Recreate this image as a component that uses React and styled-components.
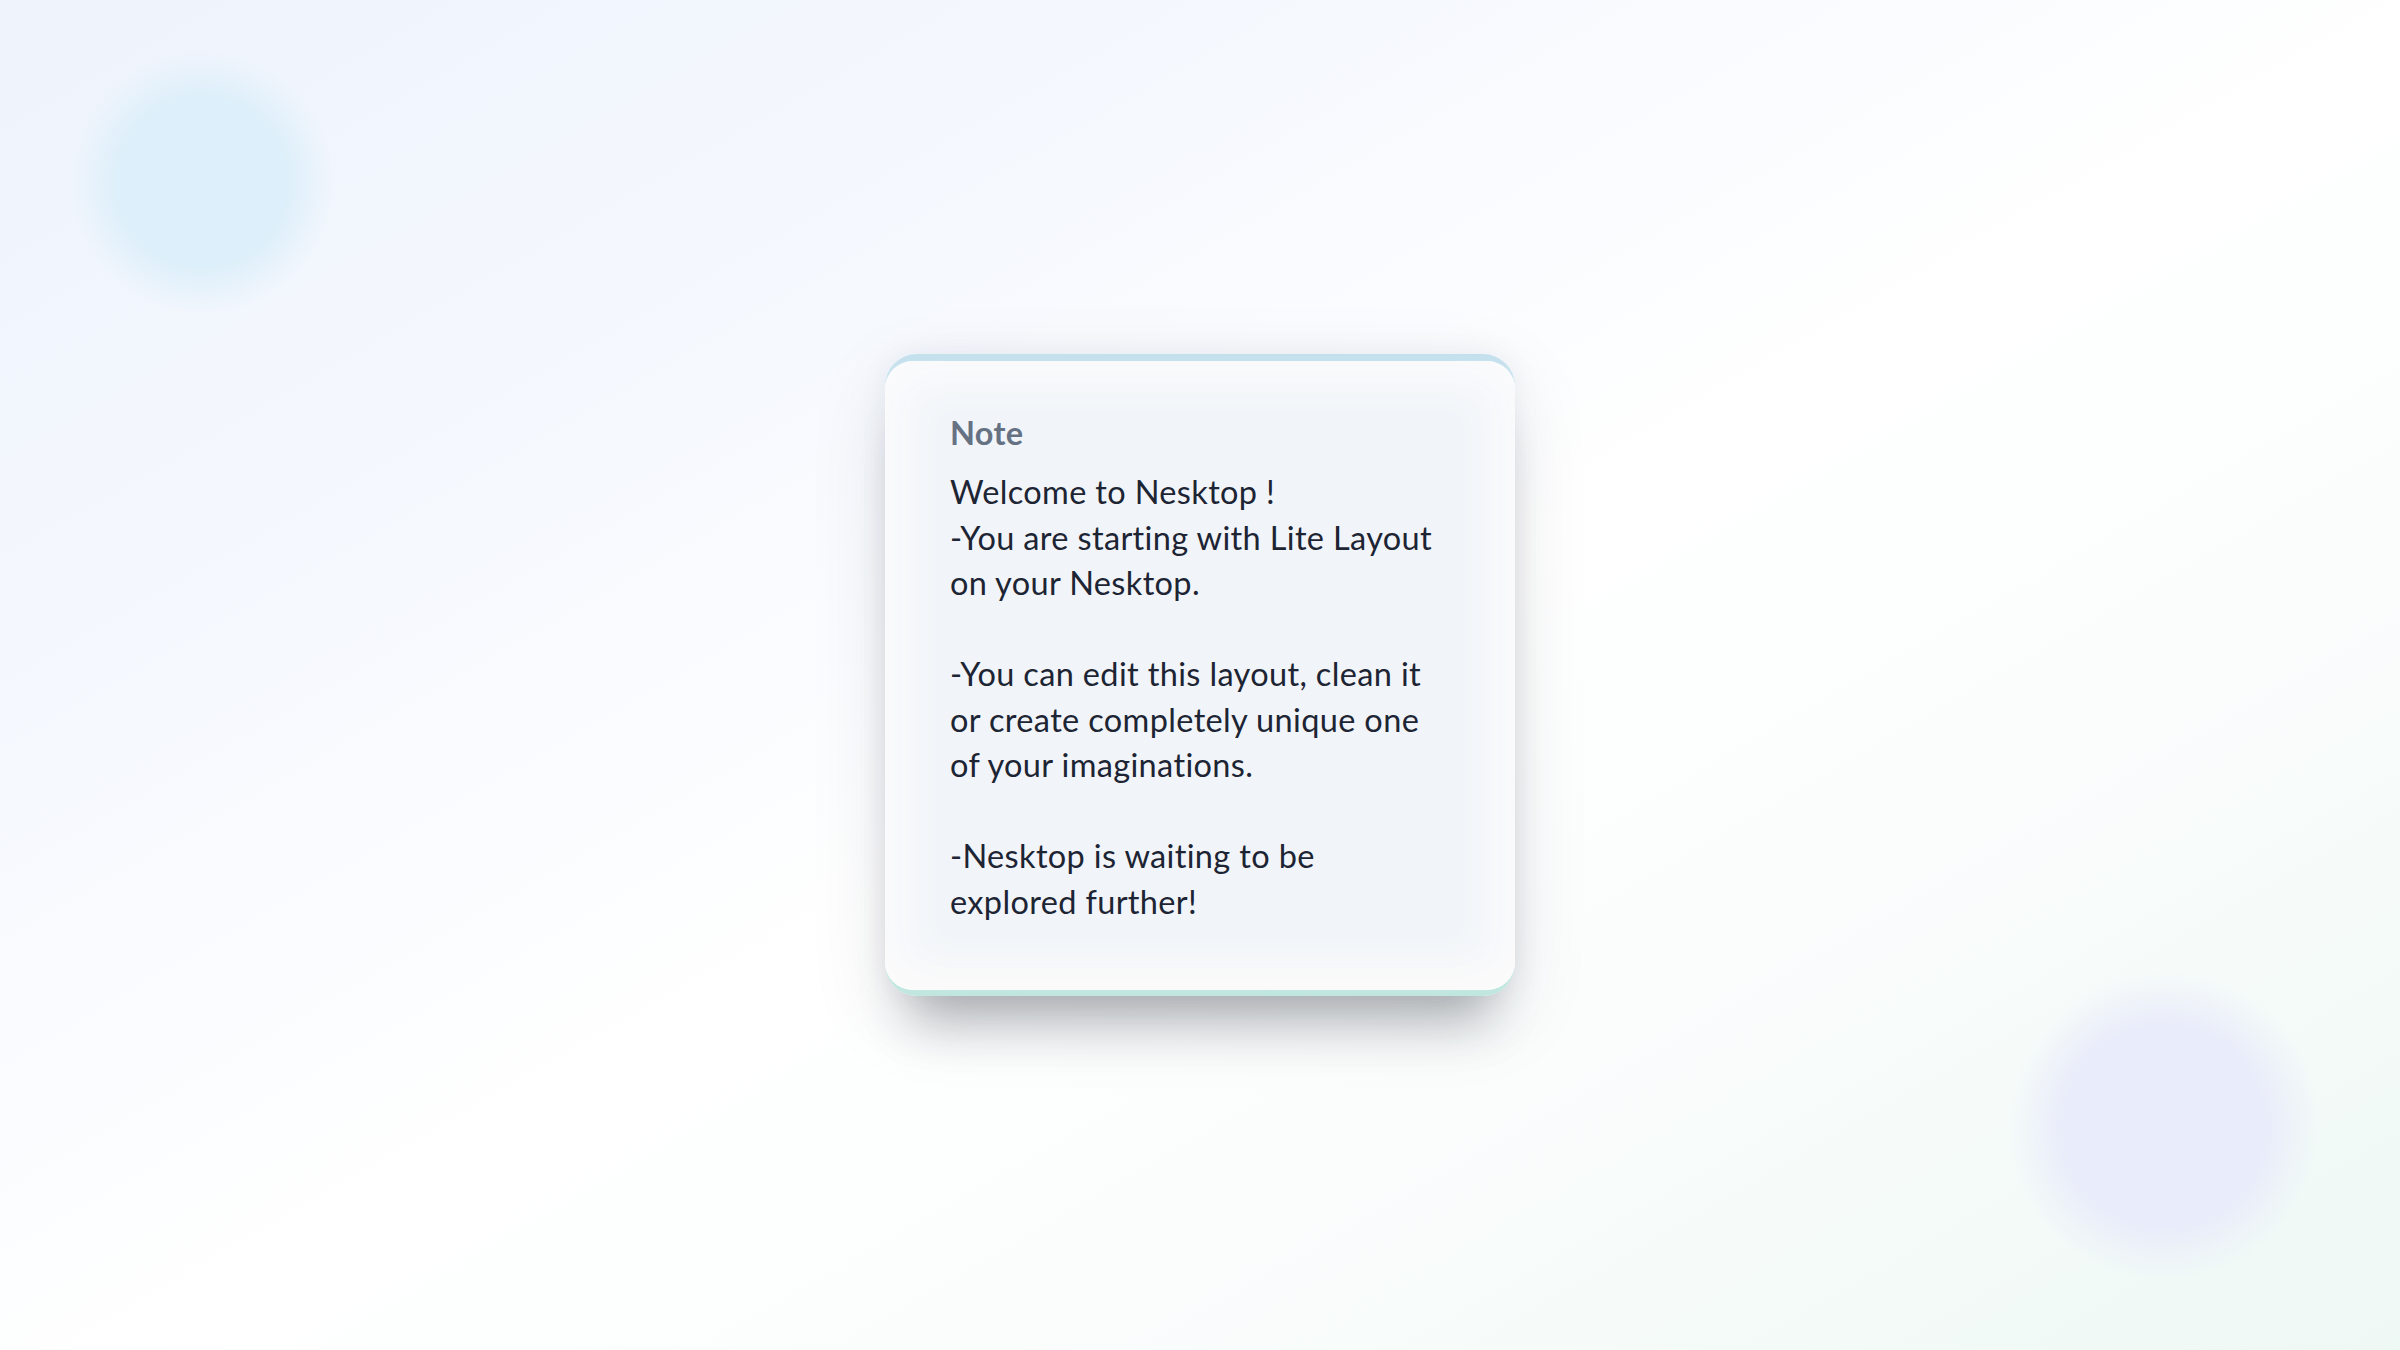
import React from 'react'
import styled, { createGlobalStyle } from 'styled-components'

const GlobalStyle = createGlobalStyle`
  html, body {
    margin: 0;
    padding: 0;
  }

  body {
    font-family: Lato, "Noto Sans", "Liberation Sans", sans-serif;
    font-variant-ligatures: none;
    -webkit-font-smoothing: antialiased;
  }
`

const noteLines = [
  'Welcome to Nesktop !',
  '-You are starting with Lite Layout',
  'on your Nesktop.',
  '',
  '-You can edit this layout, clean it',
  'or create completely unique one',
  'of your imaginations.',
  '',
  '-Nesktop is waiting to be',
  'explored further!',
]

export default function App() {
  return (
    <>
      <GlobalStyle />
      <Desktop>
        <NoteFrame>
          <NoteCard>
            <NoteTitle>Note</NoteTitle>
            <NoteBody>
              {noteLines.map((line, i) => (
                <NoteLine key={i}>{line || '\u00a0'}</NoteLine>
              ))}
            </NoteBody>
          </NoteCard>
        </NoteFrame>
      </Desktop>
    </>
  )
}

const Desktop = styled.main`
  min-height: 100vh;
  display: grid;
  place-items: center;
  background:
    radial-gradient(circle 132px at 202px 182px, rgba(221, 239, 250, 1) 0%, rgba(221, 239, 250, 1) 64%, rgba(221, 239, 250, 0) 100%),
    radial-gradient(circle 156px at 2164px 1126px, rgba(233, 236, 250, 1) 0%, rgba(233, 236, 250, 1) 64%, rgba(233, 236, 250, 0) 100%),
    linear-gradient(150deg, #eef3fc 0%, #f6f9fe 30%, #ffffff 52%, #fbfdfd 70%, #eef8f4 100%);
`

const NoteFrame = styled.section`
  width: 630px;
  padding: 7px 0 6px;
  border-radius: 32px;
  background: linear-gradient(
    180deg,
    #c3e0ed 0%,
    #e2eef3 12%,
    #f4f6f8 40%,
    #f4f6f6 70%,
    #d8eeea 90%,
    #bfe6df 100%
  );
  box-shadow:
    0 50px 50px -26px rgba(30, 36, 48, 0.3),
    0 24px 80px rgba(30, 41, 59, 0.1),
    0 0 30px rgba(30, 41, 59, 0.05);
`

const NoteCard = styled.div`
  border-radius: 28px;
  padding: 49px 65px 66px;
  background: #f1f5f9;
  box-shadow: inset 0 0 40px 22px #fbfbfc, inset 0 -30px 30px -10px #f8f7f5;
`

const NoteTitle = styled.h2`
  margin: 0 0 14px;
  font-size: 32.5px;
  line-height: 45.5px;
  font-weight: 700;
  letter-spacing: 0.3px;
  color: #667284;
`

const NoteBody = styled.div`
  font-size: 32.5px;
  line-height: 45.5px;
  letter-spacing: 0.35px;
  color: #1d2433;
`

const NoteLine = styled.div`
  white-space: nowrap;
`
